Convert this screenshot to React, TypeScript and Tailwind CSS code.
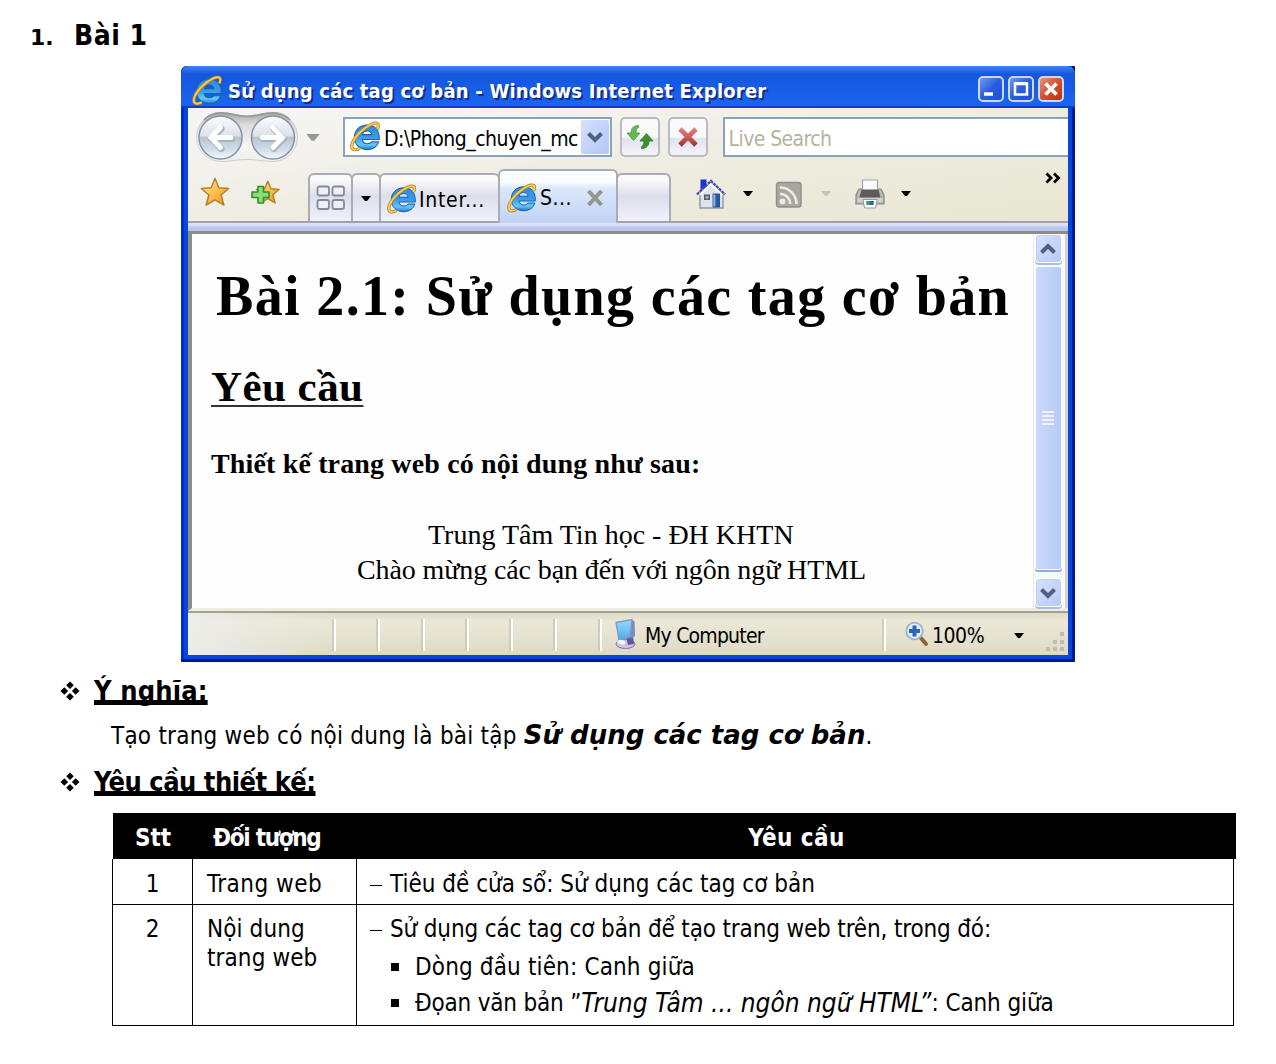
import type { ReactNode } from "react";

const IE = ({ className = "" }: { className?: string }) => (
  <svg viewBox="0 0 30 30" className={`shrink-0 ${className}`}>
    <defs>
      <linearGradient id="ie" x1="0" y1="0" x2="0" y2="1">
        <stop offset="0" stopColor="#2f8cdc" />
        <stop offset="0.5" stopColor="#3a9ae8" />
        <stop offset="0.8" stopColor="#62c8fa" />
        <stop offset="1" stopColor="#1f78cc" />
      </linearGradient>
    </defs>
    <path d="M28.300 18H11.900c.6 2.600 2.300 4 4.900 4 2 0 3.400-.7 4.300-2h6.700c-1.700 5.100-5.500 7.700-11 7.700C9.500 27.700 4.300 22.900 4.300 15.800 4.300 8.600 9.600 3.800 16.600 3.800c7.400 0 12.200 5 11.700 14.200zM12 13.200h9.100c-.5-2.400-2.100-3.600-4.500-3.600s-4 1.200-4.600 3.600z" fill="url(#ie)" stroke="#1560b0" strokeWidth="1" />
    <path d="M26.500 8C28.800 2.500 26.500.7 20.500 3.300 13.500 6.300 5 14.500 2.400 21.300.5 27 3 29.500 9.500 26.500" fill="none" stroke="#b07a18" strokeWidth="3.200" />
    <path d="M26.500 8C28.800 2.500 26.500.7 20.500 3.300 13.500 6.300 5 14.500 2.400 21.300.5 27 3 29.500 9.500 26.500" fill="none" stroke="#f8cc58" strokeWidth="1.900" />
  </svg>
);

const Tri = ({ className = "" }: { className?: string }) => (
  <svg viewBox="0 0 10 6" className={`h-[6px] w-[10px] shrink-0 ${className}`}>
    <path d="M0 0H10L6 5H4z" fill="currentColor" />
  </svg>
);

const Chevron = ({ flip = false }: { flip?: boolean }) => (
  <svg viewBox="0 0 16 12" className={`h-[12px] w-[16px] ${flip ? "rotate-180" : ""}`}>
    <path d="M1.500 2.500L8 9l6.500-6.500" fill="none" stroke="#4d6185" strokeWidth="4" />
  </svg>
);

const NavButtons = () => (
  <svg viewBox="0 0 102 52" className="h-[52px] w-[102px] shrink-0">
    <defs>
      <linearGradient id="pill" x1="0" y1="0" x2="0" y2="1">
        <stop offset="0" stopColor="#a5a5a5" />
        <stop offset="0.250" stopColor="#dcdcdc" />
        <stop offset="0.700" stopColor="#f6f6f4" />
        <stop offset="1" stopColor="#ececea" />
      </linearGradient>
      <linearGradient id="ball" x1="0" y1="0" x2="0" y2="1">
        <stop offset="0" stopColor="#fafbfd" />
        <stop offset="0.460" stopColor="#dde2ea" />
        <stop offset="0.500" stopColor="#bac4d0" />
        <stop offset="0.800" stopColor="#d2e0ec" />
        <stop offset="1" stopColor="#f4fbff" />
      </linearGradient>
    </defs>
    <path d="M25 1.500c11 0 15 3.500 26 3.500s15-3.500 26-3.500a24.500 24.500 0 0 1 0 49c-11 0-15-2-26-2s-15 2-26 2a24.500 24.500 0 0 1 0-49z" fill="url(#pill)" stroke="#cfcfcf" strokeWidth="1" />
    <path d="M8 9C13 3 19 1.800 25 1.800c11 0 15 3.500 26 3.500s15-3.500 26-3.500c6 0 12 1.200 17 7.200" fill="none" stroke="#989898" strokeWidth="1.800" />
    <circle cx="24.500" cy="26.500" r="21.500" fill="url(#ball)" stroke="#8492a8" strokeWidth="1.500" />
    <circle cx="77" cy="26.500" r="21.500" fill="url(#ball)" stroke="#8492a8" strokeWidth="1.500" />
    <g fill="none" stroke="#a9b3c2" strokeWidth="6.500" strokeLinecap="round" transform="translate(0.800 1.200)">
      <path d="M35 26.500H15M24.500 16.500l-9.500 10 9.500 10" />
      <path d="M66.500 26.500h20M77 16.500l9.500 10-9.500 10" />
    </g>
    <g fill="none" stroke="#fff" strokeWidth="5" strokeLinecap="round">
      <path d="M35 26.500H15M24.500 16.500l-9.500 10 9.500 10" />
      <path d="M66.500 26.500h20M77 16.500l9.500 10-9.500 10" />
    </g>
  </svg>
);

const STAR = "M15 1.500l3.800 9.200 9.900.8-7.600 6.500 2.800 10L15 22.800 6.100 28l2.800-10L1.300 11.500l9.900-.8z";

const Star = () => (
  <svg viewBox="0 0 30 30" className="h-[30px] w-[30px] shrink-0">
    <defs>
      <linearGradient id="star" x1="0" y1="0" x2="1" y2="1">
        <stop offset="0" stopColor="#ffe9a0" />
        <stop offset="0.500" stopColor="#fcc050" />
        <stop offset="1" stopColor="#ee8c10" />
      </linearGradient>
    </defs>
    <path d={STAR} fill="url(#star)" stroke="#b8802a" strokeWidth="1.500" strokeLinejoin="round" />
  </svg>
);

const AddStar = () => (
  <svg viewBox="0 0 30 30" className="h-[30px] w-[30px] shrink-0">
    <g transform="translate(5.500 3) scale(0.820)">
      <path d={STAR} fill="url(#star)" stroke="#b8802a" strokeWidth="1.800" strokeLinejoin="round" />
    </g>
    <path d="M8 9.500h5.500v5.500H19v5.500h-5.500V26H8v-5.500H2V15h6z" fill="#8ede78" stroke="#2f8f2a" strokeWidth="1.600" strokeLinejoin="round" />
  </svg>
);

const QuickTabs = () => (
  <svg viewBox="0 0 30 26" className="h-[26px] w-[30px]">
    <g fill="#eef0f6" stroke="#85899a" strokeWidth="1.800">
      <rect x="1.500" y="1.500" width="11.500" height="9" rx="2" />
      <rect x="16.500" y="1.500" width="11.500" height="9" rx="2" />
      <rect x="1.500" y="15" width="11.500" height="9" rx="2" />
      <rect x="16.500" y="15" width="11.500" height="9" rx="2" />
    </g>
  </svg>
);

const Refresh = () => (
  <svg viewBox="0 0 28 26" className="h-[26px] w-[28px]">
    <path d="M12.500 1.500C7.500 1.500 5 4.500 5 9H1l6.500 7.500L14 9h-4c0-3 .8-4.800 2.500-5.500z" fill="#6cb850" stroke="#4a9a38" strokeWidth="0.800" />
    <path d="M15.500 24.500c5 0 7.500-3 7.500-7.500h4l-6.500-7.500L14 17h4c0 3-.8 4.800-2.500 5.500z" fill="#43902c" stroke="#2f7a22" strokeWidth="0.800" />
  </svg>
);

const Stop = () => (
  <svg viewBox="0 0 22 22" className="h-[22px] w-[22px]">
    <defs>
      <linearGradient id="stop" x1="0" y1="0" x2="0" y2="22" gradientUnits="userSpaceOnUse">
        <stop offset="0" stopColor="#e08a86" />
        <stop offset="0.500" stopColor="#d05a58" />
        <stop offset="1" stopColor="#8e2828" />
      </linearGradient>
    </defs>
    <path d="M3 3l16 16M19 3L3 19" stroke="url(#stop)" strokeWidth="4.800" />
  </svg>
);

const Home = () => (
  <svg viewBox="0 0 30 30" className="h-[30px] w-[30px] shrink-0">
    <path d="M4 14L15 4l12 11v14H4z" fill="#dfe3ec" stroke="#8e96a6" strokeWidth="1.400" />
    <path d="M4.500 .5h6v7l-6 4z" fill="#1c34c4" />
    <path d="M1 15.500L15 2l14 13.500" fill="none" stroke="#3a50b4" strokeWidth="2.400" strokeDasharray="3 0.800" />
    <path d="M3.500 16L15 5l11.500 11" fill="none" stroke="#fff" strokeWidth="1.800" />
    <rect x="8" y="15.500" width="6" height="5.500" fill="#555b66" />
    <path d="M9 18.200h4M11 16.500v4" stroke="#cdd" strokeWidth="0.800" />
    <rect x="17" y="15" width="6.500" height="13" fill="#245aa0" stroke="#1b3f78" strokeWidth="0.800" />
    <rect x="17.200" y="15.500" width="2.200" height="12" fill="#7fb2e2" />
  </svg>
);

const Feed = () => (
  <svg viewBox="0 0 28 28" className="h-[28px] w-[28px] shrink-0">
    <rect x="1.500" y="1.500" width="24.500" height="24.500" rx="2.500" fill="#a8a8a0" stroke="#90908a" strokeWidth="1.400" />
    <g fill="none" stroke="#ecebe0" strokeWidth="2.600">
      <path d="M5 13a9.500 9.500 0 0 1 10 10M5 6.500a16.500 16.500 0 0 1 16.500 16.500" />
    </g>
    <circle cx="7.500" cy="20.500" r="3" fill="#ecebe0" />
  </svg>
);

const Printer = () => (
  <svg viewBox="0 0 30 30" className="h-[30px] w-[30px] shrink-0">
    <path d="M4 10h22l3 6v9H1v-9z" fill="#b9b9b9" stroke="#868686" strokeWidth="1.200" />
    <path d="M7.500 1h15v11h-15z" fill="#fafafa" stroke="#a5a5a5" strokeWidth="1.200" />
    <path d="M6.500 10.500h17l2 8h-21z" fill="#5c5c5c" />
    <path d="M2.500 19h25v4h-25z" fill="#d0d0d0" />
    <path d="M8 20.500h14L20.500 29h-11z" fill="#fff" stroke="#999" strokeWidth="1" />
    <path d="M11 22h4v4h-3.500z" fill="#3b9a78" />
    <path d="M15 22h4l-.5 4H15z" fill="#2b66b8" />
    <path d="M26.500 16v3" stroke="#6de05a" strokeWidth="1.600" />
  </svg>
);

const Computer = () => (
  <svg viewBox="0 0 24 32" className="h-[32px] w-[24px] shrink-0">
    <defs>
      <linearGradient id="scr" x1="0" y1="0" x2="0" y2="1">
        <stop offset="0" stopColor="#9adcf8" />
        <stop offset="1" stopColor="#4aaaf0" />
      </linearGradient>
    </defs>
    <ellipse cx="11.500" cy="26" rx="9.500" ry="4.500" fill="#c9c8e0" stroke="#7d78a0" strokeWidth="1" />
    <path d="M12 19l7-1 1 8-6 1z" fill="#5a58a0" />
    <path d="M16 2l4.500 1 .5 15-4 3z" fill="#7f88c0" />
    <path d="M2 4.500l16-3-2 17.500-11 3z" fill="url(#scr)" stroke="#7d98c8" strokeWidth="1.300" />
    <path d="M3 24c2-3 6-3 8 0s-4 4-8 0z" fill="#f4f4fa" />
  </svg>
);

const ZoomIcon = () => (
  <svg viewBox="0 0 24 26" className="h-[26px] w-[24px] shrink-0">
    <path d="M15 16l6 7" stroke="#96602c" strokeWidth="4" strokeLinecap="round" />
    <circle cx="9.500" cy="10" r="8.300" fill="#dff0fc" stroke="#9fb2d0" strokeWidth="1.800" />
    <path d="M9.500 4.500v11M4 10h11" stroke="#2a66b4" strokeWidth="4" />
  </svg>
);

const Dash = () => (
  <span className="w-[20px]">
    <svg viewBox="0 0 12 8" className="h-[8px] w-[12px]"><path d="M0 1.500h12" stroke="#000" strokeWidth="1" /></svg>
  </span>
);

const CaptionButton = ({ red = false, children }: { red?: boolean; children: ReactNode }) => (
  <div className={`flex h-[26px] w-[26px] items-center justify-center rounded-[5px] border-2 border-[#ccd8f8] ${red ? "bg-linear-to-br from-[#e89078] via-[#d4502c] to-[#b83410]" : "bg-linear-to-br from-[#7295ee] via-[#2b5ce0] to-[#1d4fd8]"}`}>
    <svg viewBox="0 0 22 22" className="h-[22px] w-[22px]">{children}</svg>
  </div>
);

const ToolButton = ({ children }: { children: ReactNode }) => (
  <div className="flex h-[40px] w-[40px] items-center justify-center rounded-[5px] border-2 border-[#b9bac2] bg-linear-to-b from-[#fafafb] from-50% via-[#e0e2ee] via-55% to-[#f4f5fa]">{children}</div>
);

const ScrollCap = ({ flip = false }: { flip?: boolean }) => (
  <div className="flex h-[27px] w-[25px] shrink-0 items-center justify-center rounded-[3px] border border-[#c0cff4] bg-linear-to-br from-[#d4e0fc] to-[#b8caf6] shadow-[0_0_0_1px_#fff,0_2px_0_1px_#a9c0e6]">
    <Chevron flip={flip} />
  </div>
);

const LINE = "whitespace-nowrap shrink-0";
const TAB = "flex items-center rounded-t-[6px] border-2 border-b-0 border-[#a9abb5] bg-linear-to-b from-[#fafafa] from-10% via-[#dcdfeb] via-45% to-[#eff0fa]";

function BrowserWindow() {
  return (
    <section className="ml-[181px] flex h-[596px] w-[894px] flex-col rounded-tl-[6px] bg-[#0a46dc] px-[7px] pb-[7px] font-['DejaVu_Sans_Condensed','DejaVu_Sans',sans-serif] shadow-[inset_-3px_-3px_1px_#001a90,inset_3px_0_0_#0030cc]">
      <header className="-mx-[7px] flex h-[42px] shrink-0 items-center rounded-t-[8px] bg-linear-to-b from-[#3b86f4] via-[#1556dc] via-20% to-[#1c66f4] pt-[8px] pr-[11px] pl-[11px] shadow-[inset_0_-2px_1px_#0c3cc8]">
        <IE className="mb-[2px] h-[31px] w-[31px]" />
        <span className={`${LINE} ml-[5px] text-[20px] font-bold tracking-[0.200px] text-white [text-shadow:2px_2px_0_#10308c]`}>Sử dụng các tag cơ bản - Windows Internet Explorer</span>
        <div className="mb-[4px] ml-auto flex gap-[4px]">
          <CaptionButton><path d="M4 16h9" stroke="#fff" strokeWidth="3.500" /></CaptionButton>
          <CaptionButton><path d="M5 6h12v10.500H5z" fill="none" stroke="#fff" strokeWidth="2.500" /><path d="M4 5.500h14" stroke="#fff" strokeWidth="3" /></CaptionButton>
          <CaptionButton red><path d="M5.500 5.500l11 11M16.500 5.500l-11 11" stroke="#fff" strokeWidth="3.800" /></CaptionButton>
        </div>
      </header>
      <div className="flex h-[115px] shrink-0 flex-col overflow-hidden bg-linear-to-br from-[#f6f6f6] via-[#efede2] via-50% to-[#e9e6d2]">
        <div className="flex h-[57px] items-center pl-[8px]">
          <NavButtons />
          <Tri className="mt-[3px] ml-[8px] h-[8px]! w-[14px]! text-[#979797]" />
          <div className="ml-[23px] flex h-[40px] w-[269px] items-center border-2 border-[#88a3c0] bg-white pl-[5px]">
            <IE className="h-[31px] w-[31px]" />
            <span className={`${LINE} ml-[3px] pt-[6px] text-[21px] tracking-[-0.500px]`}>D:\Phong_chuyen_mc</span>
            <div className="mr-[1px] ml-auto flex h-[34px] w-[28px] shrink-0 items-center justify-center rounded-[2px] bg-linear-to-br from-[#d4e0fc] to-[#b4c6f4]"><Chevron /></div>
          </div>
          <div className="ml-[8px]"><ToolButton><Refresh /></ToolButton></div>
          <div className="ml-[8px]"><ToolButton><Stop /></ToolButton></div>
          <div className="ml-[15px] flex h-[40px] w-[346px] items-center border-2 border-r-0 border-[#88a3c0] bg-white pl-[4px]">
            <span className={`${LINE} pt-[6px] text-[21px] tracking-[-0.600px] text-[#b5b2a0]`}>Live Search</span>
          </div>
        </div>
        <div className="flex h-[58px] items-end border-b-2 border-[#a0a1ac] pl-[12px]">
          <div className="mb-[14px] flex gap-[20px]"><Star /><AddStar /></div>
          <div className={`${TAB} ml-[28px] h-[48px] w-[45px] justify-center`}><QuickTabs /></div>
          <div className={`${TAB} -ml-[2px] h-[48px] w-[30px] justify-center`}><Tri className="mt-[2px]" /></div>
          <div className={`${TAB} -ml-[2px] h-[48px] w-[121px] gap-[2px] pl-[6px]`}>
            <IE className="mt-[2px] h-[30px] w-[30px]" /><span className={`${LINE} pt-[6px] text-[21px] tracking-[0.700px]`}>Inter...</span>
          </div>
          <div className="z-10 -mb-[2px] -ml-[2px] flex h-[54px] w-[120px] items-center rounded-t-[6px] border-2 border-b-0 border-[#a9abb5] bg-linear-to-b from-[#fbfcfe] from-20% via-[#d9e7fa] via-35% to-[#c2d2f6] pl-[7px]">
            <IE className="mt-[2px] h-[30px] w-[30px]" /><span className={`${LINE} ml-[3px] pt-[4px] text-[21px] tracking-[0.500px]`}>S...</span>
            <svg viewBox="0 0 18 16" className="ml-auto mt-[2px] mr-[12px] h-[16px] w-[18px]"><path d="M2.500 1l13 14M15.500 1l-13 14" stroke="#96968e" strokeWidth="4" /></svg>
          </div>
          <div className={`${TAB} -ml-[2px] h-[48px] w-[55px]`} />
          <div className="mb-[12px] ml-[25px] flex items-center">
            <Home /><Tri className="ml-[17px]" />
            <span className="mt-[3px] ml-[22px]"><Feed /></span><Tri className="ml-[18px] text-[#c6c5bc]" />
            <span className="ml-[24px]"><Printer /></span><Tri className="ml-[16px]" />
          </div>
          <svg viewBox="0 0 16 12" className="mr-[7px] mb-[37px] ml-auto h-[12px] w-[16px]"><path d="M1.500 1.500L6 6l-4.500 4.500M9 1.500L13.500 6 9 10.500" fill="none" stroke="#000" strokeWidth="2.800" /></svg>
        </div>
      </div>
      <div className="h-[8px] shrink-0 bg-linear-to-b from-[#dfe3f6] from-20% to-[#b8c6ef] to-60%" />
      <div className="flex h-[380px] shrink-0 border-t-[3px] border-b-[3px] border-l-[4px] border-[#8f8d80] border-b-[#efede0] bg-[#fefefe]">
        <div className="flex w-[841px] flex-col pl-[19px] font-['Liberation_Serif',serif] text-black">
          <h1 className="mt-[29px] h-[66px] pl-[5px] text-[56px] leading-[66px] font-bold"><span className={`${LINE} tracking-[1.350px]`}>Bài 2.1: Sử dụng các tag cơ bản</span></h1>
          <h2 className="mt-[33px] h-[50px] text-[43px] leading-[50px] font-bold"><span className={`${LINE} tracking-[0.450px] underline decoration-[#333] decoration-2 underline-offset-[4px] [text-decoration-skip-ink:none]`}>Yêu cầu</span></h2>
          <h3 className="mt-[35px] h-[34px] text-[28px] leading-[34px] font-bold"><span className={`${LINE} tracking-[0.150px]`}>Thiết kế trang web có nội dung như sau:</span></h3>
          <p className="mt-[36px] pl-[217px] text-[28px] leading-[35px]"><span className={LINE}>Trung Tâm Tin học - ĐH KHTN</span></p>
          <p className="pl-[146px] text-[28px] leading-[35px]"><span className={`${LINE} tracking-[-0.110px]`}>Chào mừng các bạn đến với ngôn ngữ HTML</span></p>
        </div>
        <div className="flex w-[35px] flex-col items-center border-r-[3px] border-l border-[#d5d3c6] border-l-[#efede0] bg-[#f7f8fa] pt-px pr-[3px]">
          <ScrollCap flip />
          <div className="mt-[5px] flex h-[302px] w-[25px] shrink-0 flex-col items-center justify-center gap-[2px] rounded-[2px] bg-linear-to-r from-[#cbd8fa] to-[#b8cbf8] shadow-[0_0_0_1px_#fff,0_2px_0_1px_#8fabe0]">
            <i className="h-[2px] w-[12px] bg-[#eef3ff]" /><i className="h-[2px] w-[12px] bg-[#eef3ff]" /><i className="h-[2px] w-[12px] bg-[#eef3ff]" /><i className="h-[2px] w-[12px] bg-[#eef3ff]" />
          </div>
          <div className="mt-[10px]"><ScrollCap /></div>
        </div>
      </div>
      <footer className="flex min-h-0 flex-1 items-center border-t-2 border-[#a3a192] bg-linear-to-b from-[#dedbc8] via-[#ebe8d8] via-20% to-[#dedac4] text-[21px]">
        <div className="flex h-full w-[144px] bg-linear-to-r from-[#ecede8] to-transparent" />
        {[0, 1, 2, 3, 4, 5, 6].map((i) => (
          <i key={i} className="mt-[2px] mr-[40.300px] h-[32px] w-[4px] shrink-0 border-r-2 border-l-2 border-l-[#cfccba] border-r-white" />
        ))}
        <div className="-ml-[28px] flex w-[268px] items-center gap-[7px]"><Computer /><span className={`${LINE} pt-[6px] tracking-[-0.800px]`}>My Computer</span></div>
        <i className="mt-[2px] h-[32px] w-[4px] border-r-2 border-l-2 border-l-[#cfccba] border-r-white" />
        <div className="ml-[19px] flex items-center gap-[3px]"><ZoomIcon /><span className={`${LINE} pt-[6px] tracking-[-0.500px]`}>100%</span></div>
        <Tri className="mt-[3px] ml-[30px]" />
        <svg viewBox="0 0 20 20" className="mt-[15px] mr-[3px] ml-auto h-[20px] w-[20px]">
          <path d="M15 0h4v4h-4zM8 8h4v4H8zM15 8h4v4h-4zM1 15h4v4H1zM8 15h4v4H8zM15 15h4v4h-4z" fill="#c0bdab" />
        </svg>
      </footer>
    </section>
  );
}

const Bullet = () => (
  <svg viewBox="0 0 20 20" className="h-[20px] w-[20px] shrink-0">
    <path d="M10 .5l3.800 3.800L10 8.100 6.200 4.300zM10 11.900l3.800 3.800-3.800 3.800-3.800-3.800zM4.300 6.200L8.100 10l-3.800 3.800L.5 10zM15.700 6.200l3.800 3.800-3.800 3.800-3.800-3.800z" />
  </svg>
);

const SectionTitle = ({ tight = false, children }: { tight?: boolean; children: ReactNode }) => (
  <div className="flex items-center pl-[60px]">
    <Bullet />
    <h2 className="ml-[14px] h-[31px] text-[27px] leading-[31px] font-bold">
      <span className={`${LINE} ${tight ? "tracking-[-0.500px]" : "tracking-[0.150px]"} underline decoration-[5px] underline-offset-[0px] [text-decoration-skip-ink:none]`}>{children}</span>
    </h2>
  </div>
);

export default function App() {
  return (
    <main className="h-[1064px] w-[1276px] overflow-hidden bg-white font-['DejaVu_Sans_Condensed','DejaVu_Sans',sans-serif] text-black">
      <h1 className="flex h-[66px] items-baseline pt-[17px] pl-[30px] leading-[38px] font-bold">
        <span className="w-[44px] font-['DejaVu_Sans',sans-serif] text-[22px]">1.</span>
        <span className="text-[28px] tracking-[0.500px]">Bài 1</span>
      </h1>
      <BrowserWindow />
      <div className="h-[13px]" />
      <SectionTitle>Ý nghĩa:</SectionTitle>
      <p className="mt-[13px] flex h-[32px] items-baseline pl-[111px] text-[24px] leading-[32px]">
        <span className={`${LINE} tracking-[0.230px] whitespace-pre`}>Tạo trang web có nội dung là bài tập </span>
        <b className={`${LINE} font-['DejaVu_Sans',sans-serif] text-[26px] italic`}>Sử dụng các tag cơ bản</b>
        <span>.</span>
      </p>
      <div className="mt-[15px]"><SectionTitle tight>Yêu cầu thiết kế:</SectionTitle></div>
      <div className="mt-[16px] ml-[112px] w-[1124px] text-[24px]">
        <div className="ml-px flex h-[46px] items-center bg-black pt-[3px] font-bold text-white">
          <div className="w-[80px] text-center">Stt</div>
          <div className="w-[164px] pl-[20px]"><span className={`${LINE} tracking-[-1.300px]`}>Đối tượng</span></div>
          <div className="flex-1 text-center tracking-[0.400px]">Yêu cầu</div>
        </div>
        <div className="grid w-[1122px] grid-cols-[79px_165px_1fr] border-x border-black leading-[29px]">
          <div className="h-[46px] border-b border-black pt-[11px] text-center">1</div>
          <div className="border-x border-b border-black pt-[11px] pl-[14px] tracking-[0.500px]">Trang web</div>
          <div className="flex items-baseline border-b border-black pt-[11px] pl-[13px]"><Dash /><span className={LINE}>Tiêu đề cửa sổ: Sử dụng các tag cơ bản</span></div>
          <div className="h-[121px] border-b border-black pt-[10px] text-center">2</div>
          <div className="border-x border-b border-black pt-[10px] pl-[14px] tracking-[0.100px]">Nội dung<br />trang web</div>
          <div className="border-b border-black pt-[10px] pl-[13px]">
            <div className="flex items-baseline"><Dash /><span className={`${LINE} tracking-[-0.150px]`}>Sử dụng các tag cơ bản để tạo trang web trên, trong đó:</span></div>
            <div className="mt-[9px] flex items-center pl-[21px]"><i className="mb-[2px] h-[8px] w-[8px] bg-black" /><span className={`${LINE} ml-[16px] tracking-[0.150px]`}>Dòng đầu tiên: Canh giữa</span></div>
            <div className="mt-[7px] flex h-[29px] items-center pl-[21px]"><i className="mb-[2px] h-[8px] w-[8px] bg-black" /><span className={`${LINE} ml-[16px] tracking-[-0.200px]`}>Đọan văn bản ”</span><em className={`${LINE} text-[26px]`}>Trung Tâm ... ngôn ngữ HTML”</em><span className={`${LINE} tracking-[-0.100px]`}>: Canh giữa</span></div>
          </div>
        </div>
      </div>
    </main>
  );
}
